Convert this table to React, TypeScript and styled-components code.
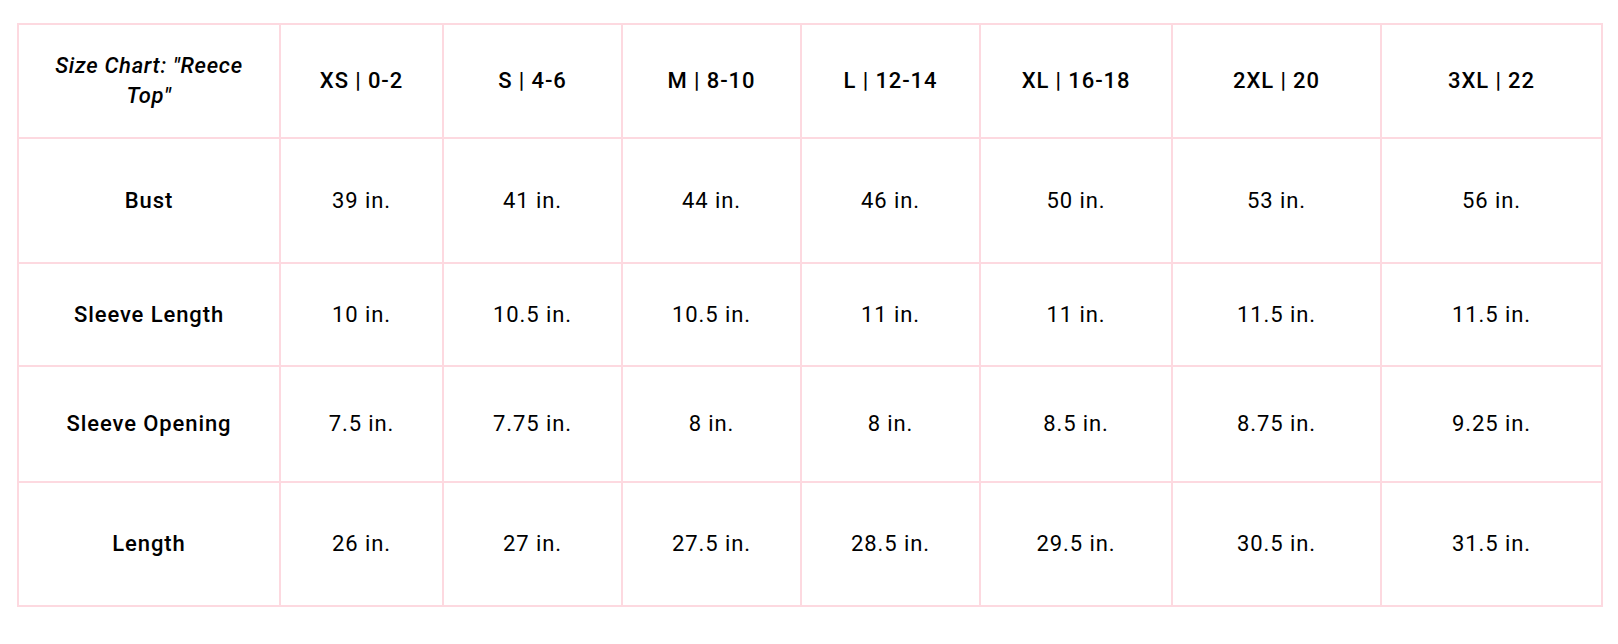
import React from "react";
import styled, { createGlobalStyle } from "styled-components";

const GlobalStyle = createGlobalStyle`
  body {
    margin: 0;
    background: #ffffff;
    font-family: Roboto, "Liberation Sans", Arial, sans-serif;
    color: #000000;
  }
`;

const Page = styled.main`
  padding: 23px 15px 0 17px;
`;

// 표 전체 (위/왼쪽 테두리는 여기서, 나머지는 셀에서)
const ChartGrid = styled.div`
  display: grid;
  grid-template-columns: 262px 163px 179px 179px 179px 192px 209px 221px;
  grid-template-rows: 114px 125px 103px 116px 124px;
  width: max-content;
  border-top: 2px solid #fdd9e0;
  border-left: 2px solid #fdd9e0;
`;

const Cell = styled.div<{ $weight?: number; $italic?: boolean }>`
  display: flex;
  align-items: center;
  justify-content: center;
  box-sizing: border-box;
  padding: 0 20px;
  border-right: 2px solid #fdd9e0;
  border-bottom: 2px solid #fdd9e0;
  text-align: center;
  font-size: 22px;
  line-height: 30px;
  letter-spacing: ${(p) => (p.$italic ? "0.7px" : "0.9px")};
  font-weight: ${(p) => p.$weight ?? 400};
  font-style: ${(p) => (p.$italic ? "italic" : "normal")};
`;

const sizes = [
  "XS | 0-2",
  "S | 4-6",
  "M | 8-10",
  "L | 12-14",
  "XL | 16-18",
  "2XL | 20",
  "3XL | 22",
];

const rows = [
  {
    label: "Bust",
    values: ["39 in.", "41 in.", "44 in.", "46 in.", "50 in.", "53 in.", "56 in."],
  },
  {
    label: "Sleeve Length",
    values: ["10 in.", "10.5 in.", "10.5 in.", "11 in.", "11 in.", "11.5 in.", "11.5 in."],
  },
  {
    label: "Sleeve Opening",
    values: ["7.5 in.", "7.75 in.", "8 in.", "8 in.", "8.5 in.", "8.75 in.", "9.25 in."],
  },
  {
    label: "Length",
    values: ["26 in.", "27 in.", "27.5 in.", "28.5 in.", "29.5 in.", "30.5 in.", "31.5 in."],
  },
];

function App() {
  return (
    <Page>
      <GlobalStyle />
      <ChartGrid role="table">
        <Cell $italic $weight={500}>Size Chart: "Reece Top"</Cell>
        {sizes.map((s) => (
          <Cell key={s} $weight={500}>
            {s}
          </Cell>
        ))}

        {rows.map((row) => (
          <React.Fragment key={row.label}>
            <Cell $weight={500}>{row.label}</Cell>
            {row.values.map((v, i) => (
              <Cell key={i}>{v}</Cell>
            ))}
          </React.Fragment>
        ))}
      </ChartGrid>
    </Page>
  );
}

export default App;
